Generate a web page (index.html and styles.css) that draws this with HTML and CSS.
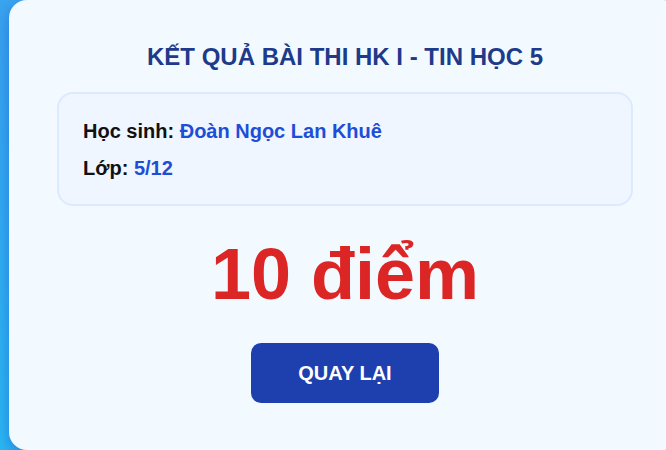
FILE: index.html
```html
<!DOCTYPE html>
<html lang="vi">

<head>
    <meta charset="UTF-8">
    <meta name="viewport" content="width=device-width, initial-scale=1.0">
    <title>Kết quả bài thi</title>
    <link rel="stylesheet" href="styles.css">
</head>

<body>
    <div class="result-card">
        <h1 class="result-title">KẾT QUẢ BÀI THI HK I - TIN HỌC 5</h1>
        <div class="info-box">
            <p class="info-line"><span class="info-label">Học sinh:</span> <span class="info-value">Đoàn Ngọc Lan Khuê</span></p>
            <p class="info-line"><span class="info-label">Lớp:</span> <span class="info-value">5/12</span></p>
        </div>
        <div class="score">10 điểm</div>
        <button class="back-btn">QUAY LẠI</button>
    </div>
</body>

</html>
```

FILE: styles.css
```css
* {
    margin: 0;
    padding: 0;
    box-sizing: border-box;
}

html,
body {
    height: 100%;
}

body {
    font-family: "Liberation Sans", Arial, sans-serif;
    background: linear-gradient(to bottom, #3ba6ee, #2bbdf0);
    padding-left: 9px;
    overflow: hidden;
}

.result-card {
    width: 672px;
    height: 450px;
    background: #f3faff;
    border-radius: 18px;
    padding: 43px 48px 0;
    box-shadow: 0 6px 18px rgba(29, 78, 216, 0.6);
    display: flex;
    flex-direction: column;
    align-items: center;
}

.result-title {
    font-size: 24px;
    line-height: 1.2;
    font-weight: bold;
    color: #1e3a8a;
    text-align: center;
}

.info-box {
    align-self: stretch;
    margin-top: 20px;
    background: #eff6ff;
    border: 2px solid #dbeafe;
    border-radius: 16px;
    padding: 22px 24px 21px;
}

.info-line {
    font-size: 20px;
    line-height: 30px;
    font-weight: bold;
}

.info-line + .info-line {
    margin-top: 7px;
}

.info-label {
    color: #111111;
}

.info-value {
    color: #1d4ed8;
}

.score {
    margin-top: 25px;
    font-size: 72px;
    line-height: 1.2;
    font-weight: bold;
    color: #dc2626;
}

.back-btn {
    margin-top: 26px;
    height: 60px;
    padding: 0 47px;
    border: none;
    border-radius: 10px;
    background: #1e40af;
    color: #ffffff;
    font-family: inherit;
    font-size: 20px;
    font-weight: bold;
    cursor: pointer;
}
```
